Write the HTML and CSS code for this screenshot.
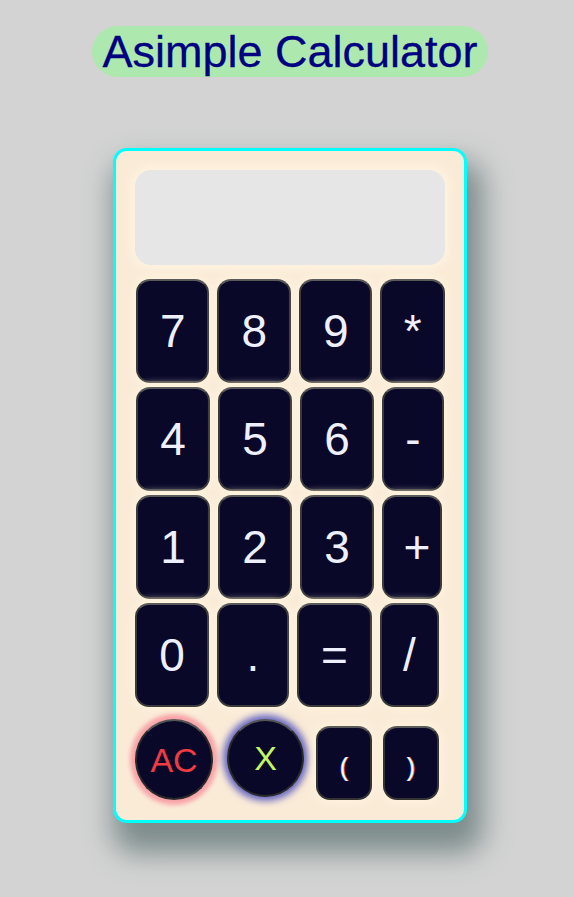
FILE: index.html
```html
<!DOCTYPE html>
<html>
<head>
<meta charset="utf-8">
<title>Asimple Calculator</title>
<link rel="stylesheet" href="styles.css">
</head>
<body>
<div class="page">
  <h1 class="title">Asimple Calculator</h1>
  <div class="calc">
    <div class="display"></div>
    <div class="keys">
      <div class="row">
        <button class="key">7</button>
        <button class="key">8</button>
        <button class="key">9</button>
        <button class="key k-star">*</button>
      </div>
      <div class="row">
        <button class="key">4</button>
        <button class="key">5</button>
        <button class="key">6</button>
        <button class="key k-minus">-</button>
      </div>
      <div class="row">
        <button class="key">1</button>
        <button class="key">2</button>
        <button class="key">3</button>
        <button class="key k-plus">+</button>
      </div>
      <div class="row row-last">
        <button class="key">0</button>
        <button class="key k-dot">.</button>
        <button class="key k-eq">=</button>
        <button class="key k-slash">/</button>
      </div>
    </div>
    <div class="bottom">
      <button class="round ac">AC</button>
      <button class="round x">X</button>
      <button class="paren">(</button>
      <button class="paren">)</button>
    </div>
  </div>
</div>
</body>
</html>
```

FILE: styles.css
```css
html, body {
  margin: 0;
  padding: 0;
  background: #d3d3d3;
  font-family: "Liberation Sans", Arial, sans-serif;
}

.page {
  min-height: 897px;
  box-sizing: border-box;
  padding-left: 6px;
  display: flex;
  flex-direction: column;
  align-items: center;
}

.title {
  margin: 26px 0 0;
  height: 51px;
  line-height: 51px;
  padding: 0 10px;
  border-radius: 26px;
  background: #ade9ae;
  color: #000080;
  font-size: 45px;
  font-weight: normal;
  -webkit-text-stroke: 0.3px #000080;
}

.calc {
  margin-top: 71px;
  width: 310px;
  padding: 19px 19px 20px 19px;
  background: #faebd7;
  border: 3px solid #00ffff;
  border-radius: 14px;
  box-shadow: 8px 22px 28px 8px rgba(105, 122, 122, 0.8);
}

.display {
  height: 95px;
  border-radius: 16px;
  background: #e6e6e6;
  box-shadow: 0 0 10px 3px #fff5e2;
}

.keys {
  margin-top: 14px;
  display: flex;
  flex-direction: column;
  gap: 4px;
}

.row {
  display: flex;
  gap: 8px;
  padding-left: 1px;
}

.row-last {
  padding-left: 0;
}

.key {
  width: 74px;
  height: 104px;
  padding: 0;
  margin: 0;
  border: 2px solid #3a3a3a;
  border-top-color: #5a5a5a;
  border-radius: 14px;
  background: #090828;
  color: #eef0ff;
  font-family: "Liberation Sans", Arial, sans-serif;
  font-size: 46px;
  box-shadow: 0 0 8px 2px #fff4df;
}

.k-star { width: 65px; }
.k-minus { width: 62px; }
.k-plus { width: 60px; padding-left: 10px; }
.k-dot { width: 72px; }
.k-eq { width: 75px; }
.k-slash { width: 59px; }

.bottom {
  margin-top: 12px;
  display: flex;
  align-items: center;
}

.round {
  width: 78px;
  height: 81px;
  border-radius: 50%;
  padding: 2px 0 0;
  border: 2px solid #2a2a2a;
  border-top-color: #555;
  background: #090828;
  font-family: "Liberation Sans", Arial, sans-serif;
  font-size: 34px;
}

.ac {
  color: #ee3b44;
  box-shadow: 0 0 4px 5px #f8a4a8;
}

.x {
  width: 77px;
  height: 78px;
  margin-left: 14px;
  margin-top: -4px;
  color: #c4f562;
  box-shadow: 0 0 7px 4px #6464c2;
}

.paren {
  width: 56px;
  height: 74px;
  padding: 10px 0 0;
  margin-left: 12px;
  margin-top: 6px;
  border: 2px solid #333;
  border-top-color: #5a5a5a;
  border-radius: 14px;
  background: #090828;
  color: #ffffff;
  font-family: "Liberation Sans", Arial, sans-serif;
  font-size: 25px;
  text-shadow: -0.6px 0 0 #3b8fff, 0.6px 0 0 #ff6a4a;
  box-shadow: 0 0 8px 2px #fff4df;
}

.paren + .paren {
  margin-left: 11px;
}
```
